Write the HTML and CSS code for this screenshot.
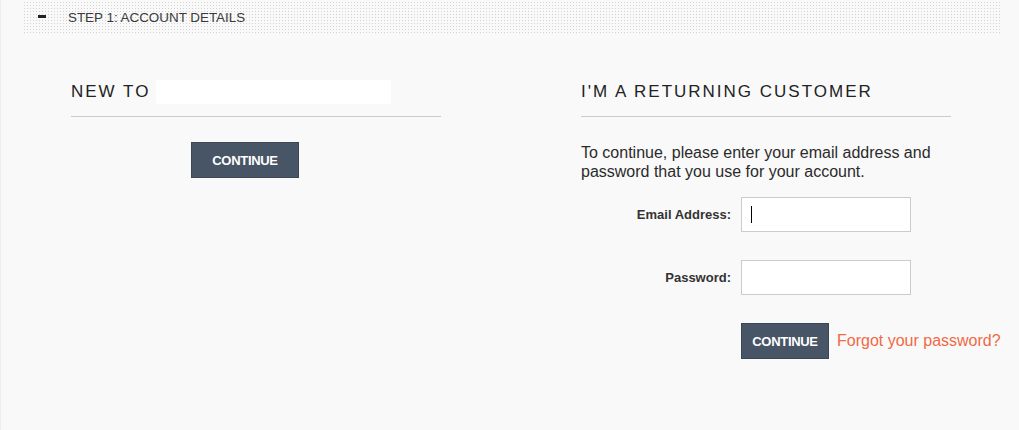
FILE: index.html
```html
<!DOCTYPE html>
<html lang="en">

<head>
    <meta charset="UTF-8">
    <meta name="viewport" content="width=device-width, initial-scale=1.0">
    <title>Checkout - Account Details</title>
    <link rel="stylesheet" href="styles.css">
</head>

<body>
    <div class="page">
        <div class="step">
            <div class="step-head">
                <span class="toggle"></span>
                <span class="step-title">Step 1: Account Details</span>
            </div>

            <div class="step-body">
                <div class="col">
                    <h2 class="col-title">New to <span class="brand"></span></h2>
                    <button class="btn btn-new" type="button">Continue</button>
                </div>

                <div class="col">
                    <h2 class="col-title">I'm a returning customer</h2>
                    <p class="intro">To continue, please enter your email address and password that you use for your account.</p>

                    <form class="login" onsubmit="return false">
                        <div class="row">
                            <label for="email">Email Address:</label>
                            <div class="field">
                                <input type="text" id="email">
                                <span class="caret"></span>
                            </div>
                        </div>
                        <div class="row">
                            <label for="password">Password:</label>
                            <div class="field">
                                <input type="password" id="password">
                            </div>
                        </div>
                        <div class="actions">
                            <button class="btn" type="submit">Continue</button>
                            <a href="#" class="forgot">Forgot your password?</a>
                        </div>
                    </form>
                </div>
            </div>
        </div>
    </div>
</body>

</html>
```

FILE: styles.css
```css
html,
body {
    margin: 0;
    background-color: #f9f9f9;
}

body {
    font-family: "Liberation Sans", Arial, sans-serif;
    color: #333;
}

.page {
    min-height: 430px;
    border-left: 1px solid #ededed;
    box-sizing: border-box;
}

.step {
    margin-left: 21px;
    width: 978px;
}

/* dotted band on top */
.step-head {
    height: 35px;
    display: flex;
    align-items: center;
    background-color: #d2d2d2;
    background-image:
        linear-gradient(to right, #f9f9f9 2px, transparent 2px),
        linear-gradient(to bottom, #f9f9f9 2px, transparent 2px);
    background-size: 3px 3px;
}

.toggle {
    width: 8px;
    height: 3px;
    margin-left: 16px;
    margin-right: 22px;
    margin-top: -3px;
    background-color: #222;
}

.step-title {
    font-size: 13.4px;
    text-transform: uppercase;
    color: #3a3a3a;
}

.step-body {
    display: flex;
    gap: 140px;
    padding-left: 49px;
}

.col {
    width: 370px;
}

.col-title {
    margin: 45px 0 0 0;
    height: 24px;
    padding-bottom: 12px;
    border-bottom: 1px solid #cbcbcb;
    display: flex;
    align-items: center;
    font-size: 17px;
    font-weight: normal;
    letter-spacing: 2px;
    text-transform: uppercase;
    color: #222;
}

.brand {
    display: inline-block;
    width: 235px;
    height: 24px;
    margin-left: 6px;
    background-color: #fff;
}

.btn {
    flex-shrink: 0;
    height: 36px;
    padding: 0;
    border: 1px solid #3c4756;
    background-color: #475566;
    color: #fff;
    font-family: "Liberation Sans", Arial, sans-serif;
    font-size: 13px;
    font-weight: bold;
    letter-spacing: -0.3px;
    text-transform: uppercase;
    cursor: pointer;
}

.btn-new {
    margin-top: 25px;
    margin-left: 120px;
    width: 108px;
}

.intro {
    margin: 26px 0 0 0;
    font-size: 16px;
    line-height: 19px;
    color: #2b2b2b;
}

.login {
    margin-top: 16px;
}

.row {
    display: flex;
    align-items: center;
    gap: 10px;
    margin-bottom: 28px;
}

.row label {
    width: 150px;
    text-align: right;
    font-size: 13px;
    font-weight: bold;
    color: #333;
}

.field {
    position: relative;
}

.field input {
    display: block;
    width: 170px;
    height: 35px;
    box-sizing: border-box;
    border: 1px solid #cbcbcb;
    background-color: #fff;
    padding: 0 10px;
    font-size: 14px;
    outline: none;
}

/* text cursor shown in the focused field */
.caret {
    position: absolute;
    left: 10px;
    top: 9px;
    width: 1px;
    height: 17px;
    background-color: #000;
}

.actions {
    display: flex;
    align-items: center;
    gap: 8px;
    margin-left: 160px;
    white-space: nowrap;
}

.actions .btn {
    width: 88px;
}

.forgot {
    font-size: 16px;
    color: #f06a45;
    text-decoration: none;
}
```
